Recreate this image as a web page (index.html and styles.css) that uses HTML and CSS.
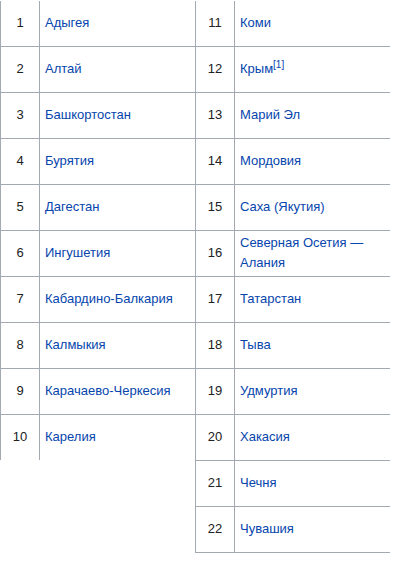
FILE: index.html
```html
<!DOCTYPE html>
<html lang="ru">
<head>
<meta charset="utf-8">
<link rel="stylesheet" href="styles.css">
</head>
<body>
<div class="tables">
  <table class="subjects">
    <tr><td class="num">1</td><td class="name"><a href="#">Адыгея</a></td></tr>
    <tr><td class="num">2</td><td class="name"><a href="#">Алтай</a></td></tr>
    <tr><td class="num">3</td><td class="name"><a href="#">Башкортостан</a></td></tr>
    <tr><td class="num">4</td><td class="name"><a href="#">Бурятия</a></td></tr>
    <tr><td class="num">5</td><td class="name"><a href="#">Дагестан</a></td></tr>
    <tr><td class="num">6</td><td class="name"><a href="#">Ингушетия</a></td></tr>
    <tr><td class="num">7</td><td class="name"><a href="#">Кабардино-Балкария</a></td></tr>
    <tr><td class="num">8</td><td class="name"><a href="#">Калмыкия</a></td></tr>
    <tr><td class="num">9</td><td class="name"><a href="#">Карачаево-Черкесия</a></td></tr>
    <tr class="last-open"><td class="num">10</td><td class="name"><a href="#">Карелия</a></td></tr>
  </table>
  <table class="subjects subjects-right">
    <tr><td class="num">11</td><td class="name"><a href="#">Коми</a></td></tr>
    <tr><td class="num">12</td><td class="name"><a href="#">Крым</a><sup class="ref"><a href="#">[1]</a></sup></td></tr>
    <tr><td class="num">13</td><td class="name"><a href="#">Марий Эл</a></td></tr>
    <tr><td class="num">14</td><td class="name"><a href="#">Мордовия</a></td></tr>
    <tr><td class="num">15</td><td class="name"><a href="#">Саха (Якутия)</a></td></tr>
    <tr><td class="num">16</td><td class="name"><a href="#">Северная Осетия — Алания</a></td></tr>
    <tr><td class="num">17</td><td class="name"><a href="#">Татарстан</a></td></tr>
    <tr><td class="num">18</td><td class="name"><a href="#">Тыва</a></td></tr>
    <tr><td class="num">19</td><td class="name"><a href="#">Удмуртия</a></td></tr>
    <tr><td class="num">20</td><td class="name"><a href="#">Хакасия</a></td></tr>
    <tr><td class="num">21</td><td class="name"><a href="#">Чечня</a></td></tr>
    <tr class="final"><td class="num">22</td><td class="name"><a href="#">Чувашия</a></td></tr>
  </table>
</div>
</body>
</html>
```
FILE: styles.css
```css
html, body {
  margin: 0;
  padding: 0;
  background: #ffffff;
}

body {
  font-family: "Liberation Sans", Arial, sans-serif;
  font-size: 13px;
  color: #202122;
}

.tables {
  display: flex;
  align-items: flex-start;
  padding-top: 1px;
}

.subjects {
  border-collapse: separate;
  border-spacing: 0;
  width: 195px;
  table-layout: fixed;
}

.subjects td {
  box-sizing: border-box;
  height: 46px;
  border-left: 1px solid #a2a9b1;
  border-bottom: 1px solid #a2a9b1;
  vertical-align: middle;
  line-height: 20px;
  padding: 0 5px 1px;
}

.subjects .num {
  width: 39px;
  text-align: center;
  padding: 0 0 1px;
}

.subjects .last-open td {
  border-bottom: none;
  height: 45px;
}

.subjects .final td {
  border-bottom: 1px solid #a2a9b1;
  box-shadow: 0 1px 0 #d6d9dd;
}

.subjects a {
  color: #0645ad;
  text-decoration: none;
}

.ref {
  font-size: 10px;
  line-height: 1;
  vertical-align: super;
}
```
